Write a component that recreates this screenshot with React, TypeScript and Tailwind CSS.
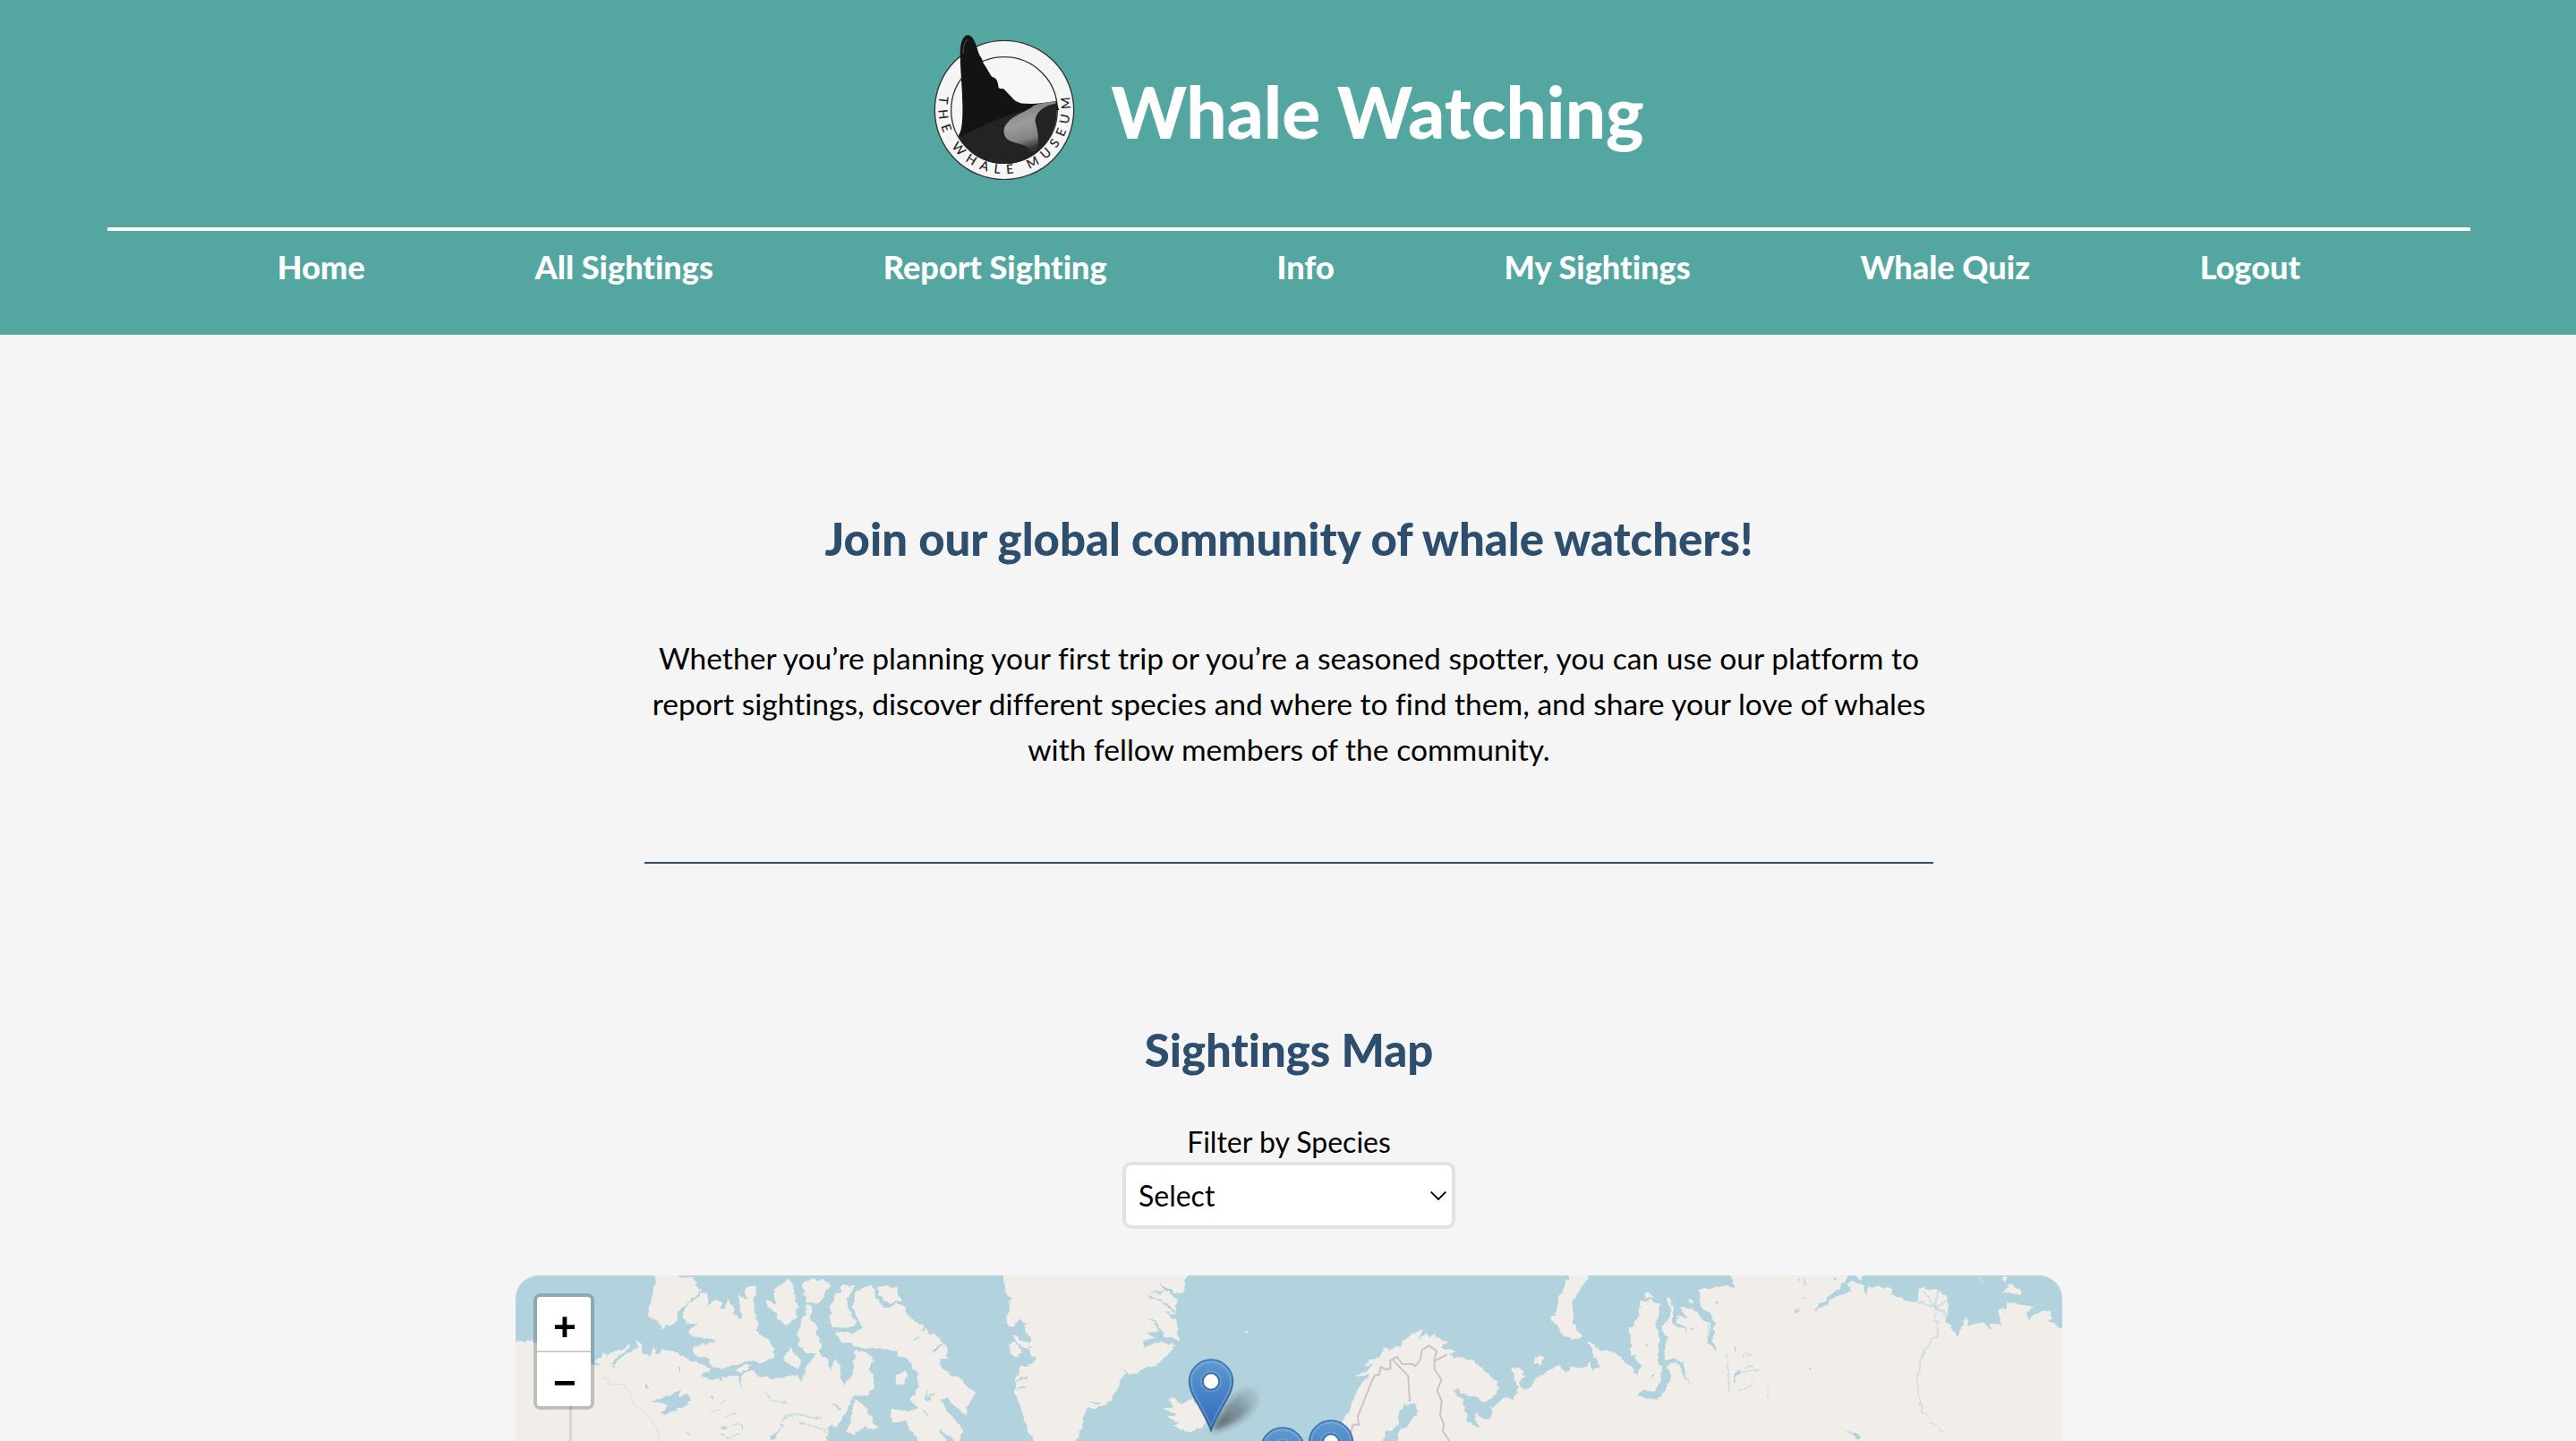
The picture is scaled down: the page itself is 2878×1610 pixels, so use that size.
import React from 'react';

const LINKS = ['Home', 'All Sightings', 'Report Sighting', 'Info', 'My Sightings', 'Whale Quiz', 'Logout'];

function Logo() {
  return (
    <svg viewBox="69 54 474 489" className="h-[163px] w-[158px] shrink-0" aria-label="The Whale Museum">
      <defs>
        <path id="ring" d="M89 262 A221 221 0 1 0 525 268" fill="none" />
        <clipPath id="inner">
          <path d="M0 0H600V309H482A176 180 0 0 1 130 309L100 309H0Z" />
        </clipPath>
        <linearGradient id="water" x1="0" y1="0" x2="0.3" y2="1">
          <stop offset="0" stopColor="#6f6f6f" />
          <stop offset="0.5" stopColor="#9c9c9c" />
          <stop offset="0.8" stopColor="#858585" />
          <stop offset="1" stopColor="#333" />
        </linearGradient>
      </defs>
      <circle cx="306" cy="309" r="233" fill="#f5f5f5" stroke="#333" strokeWidth="4" />
      <circle cx="306" cy="309" r="178" fill="#f6f6f6" stroke="#333" strokeWidth="4" />
      <g clipPath="url(#inner)">
        <path
          d="M153 393C164 380 167 340 166 290C165 230 158 170 158 115C160 80 168 58 185 58C203 60 212 90 219 115C224 130 232 134 236 152C250 170 256 188 266 198C280 202 284 210 287 234C292 240 303 234 307 241L337 272C345 282 352 280 358 285C390 291 440 286 479 278L490 309V500H130Z"
          fill="#131313"
        />
        <path d="M155 400C200 380 250 350 310 330C380 310 420 290 482 280V500H150Z" fill="#232323" />
        <path
          d="M478 279C450 283 425 286 404 294C385 314 335 326 318 350C300 368 300 392 318 408C345 425 375 420 390 440C400 452 412 452 417 435C424 400 416 372 410 348C408 318 440 292 478 287Z"
          fill="url(#water)"
        />
        <path d="M168 120C168 98 173 82 183 72" fill="none" stroke="#555" strokeWidth="3" />
      </g>
      <text fill="#222" className="font-['Lato',sans-serif] text-[43px] font-medium">
        <textPath href="#ring" textLength="770" lengthAdjust="spacing">
          THE WHALE MUSEUM
        </textPath>
      </text>
    </svg>
  );
}

const LAND_WEST = [
  'M0 620V264L75 262L92 275L270 335L298 348L285 330L315 305L325 320L350 300L402 278L395 295L370 308L335 340L350 345L375 318L405 300L425 285L422 262L440 275L448 305L470 320L480 280L490 314L512 295L545 298L575 315L620 335L650 345L668 365L643 378L650 390L700 394L740 378L765 378L772 430L775 385L800 365L830 378L865 390L920 388L960 375L980 405L990 350L1010 335L1030 300L1065 325L1073 370L1085 325L1095 325L1108 355L1110 385L1120 415L1145 380L1152 345L1155 298L1180 300L1220 325L1205 360L1222 400L1220 420L1190 450L1150 448L1140 470L1128 500L1115 530L1095 550L1070 550L1062 575L1065 620Z',
  'M480 40L486 70L475 120L462 178L495 195L512 228L530 210L555 205L560 170L585 145L640 95L610 50L570 55L560 40Z',
  'M580 165L600 135L640 108L660 105L665 130L660 155L685 125L710 135L700 158L725 150L722 125L750 145L755 180L770 195L778 185L765 140L765 110L790 130L785 95L800 82L822 82L825 110L810 130L820 160L828 200L828 235L860 260L887 285L885 320L840 340L790 330L760 345L700 358L672 355L665 325L640 320L612 310L608 285L640 275L695 270L680 258L600 248L592 235L630 212L590 205L578 190Z',
  'M860 125L890 142L882 95L900 75L940 60L950 90L960 130L962 180L935 205L922 217L905 190L880 165L862 140Z',
  'M980 70L1010 55L1070 68L1040 137L990 135L985 105Z',
  'M990 140L1015 148L1003 190L1018 205L1030 235L1045 285L1030 310L985 300L963 275L970 220L985 190Z',
  'M925 300L940 290L975 330L970 358L945 350L915 325Z',
  'M755 362L790 342L808 345L795 360L770 372Z',
  'M1074 215V150L1090 110L1120 78L1160 75L1150 90L1130 130L1135 170L1160 200L1150 215L1110 222Z',
  'M1155 110L1180 85L1215 80L1228 115L1240 140L1260 150L1290 140L1322 150V325L1290 300L1240 285L1190 290L1150 278L1110 265L1083 235L1150 238L1180 220L1165 190L1150 160Z',
  'M1230 80L1290 85L1312 130L1270 137L1240 115Z',
  'M1150 462L1172 472L1190 490L1215 530L1237 555L1220 568L1190 550L1175 560L1158 582L1125 565L1140 540L1148 500Z',
  'M1275 515L1305 492L1322 500V540L1290 535Z',
];

const LAND_MID = [
  'M0 95L18 130L0 127Z',
  'M-10 145L30 165L50 190L80 205L100 215L110 240L150 250L170 290L180 325L150 325L155 350L190 375L230 400L255 430L270 440L250 470L235 510L215 500L190 470L170 450L155 462L175 500L210 540L225 565L215 605L195 598L145 560L175 610L80 610L60 570L35 535L-10 535V497L40 500L82 490L50 462L85 420L75 380L60 345L-10 285Z',
  'M5 380L30 368L40 385L25 410L5 415Z',
  'M362 40L365 85L390 125L380 165L372 208L395 215L415 190L435 205L440 240L455 260L445 290L470 325L455 345L420 350L405 390L405 440L420 490L435 540L470 610L600 610L625 560L630 510L650 490L690 485L720 465L745 430L750 400L775 378L760 352L785 378L830 360L875 345L942 282L890 268L835 285L830 265L870 255L845 240L885 235L870 205L835 182L880 205L890 225L910 252L952 262L945 200L900 160L940 175L945 130L905 95L880 66L920 90L935 108L970 95L970 70L990 40Z',
  'M390 250L410 248L450 275L445 290L415 275Z',
  'M383 275L400 272L432 300L410 320L388 310Z',
  'M905 488L938 490L915 462L930 448L950 470L965 475L990 460L1015 475L1045 520L1040 545L1000 572L960 560L932 548L948 538L912 516L942 512Z',
  'M1165 242L1185 226L1184 236Z',
];

const LAND_NORDIC = [
  'M575 620L600 530L620 510L640 450L660 410L692 378L640 385L680 362L705 340L672 352L690 325L725 318L740 285L755 300L775 282L800 285L795 265L840 235L865 230L855 268L880 232L890 255L905 235L915 252L950 265L930 290L982 295L960 315L1000 320L1040 330L1080 370L1120 405L1122 440L1080 465L1030 450L980 425L975 432L1000 460L1015 500L1015 530L1040 550L1062 557L1042 525L1050 505L1075 530L1095 520L1100 490L1150 450L1172 465L1185 420L1172 370L1160 352L1200 360L1215 385L1190 400L1200 430L1235 430L1240 400L1330 355V620H775L790 570L820 545L850 510L850 482L810 476L790 500L785 545L745 570L725 620Z',
  'M1245 320L1260 310L1278 325L1262 348L1243 340Z',
];

const LAND_EAST = [
  'M20 620V440L38 402L85 365L110 355L130 340L140 362L150 372L165 352L200 355L230 335L235 365L258 345L245 310L220 270L228 262L258 295L310 302L345 330L388 375L398 345L380 310L362 310L370 260L358 230L390 190L402 130L440 130L463 142L460 180L445 210L462 240L458 335L475 355L465 400L445 435L400 430L395 440L420 458L455 458L480 430L497 390L490 350L515 335L535 350L545 395L565 402L545 380L550 350L515 322L480 330L478 290L488 255L468 215L498 185L500 150L487 122L492 118L510 150L506 215L540 222L558 238L545 212L520 205L525 180L555 188L535 160L545 150L580 160L612 195L640 200L620 270L655 300L640 265L648 200L620 165L600 155L597 92L690 75L712 85L700 40L1095 40L1085 70L1030 115L980 165L1060 115L1105 95L1090 75L1105 62L1140 82L1158 108L1160 90L1195 80L1245 92L1242 110L1290 128L1325 132L1328 88L1400 95L1425 115L1430 150L1425 190L1400 160L1430 210L1460 250L1472 220L1485 185L1500 212L1540 200L1577 225L1570 205L1608 212L1595 160L1625 155L1625 135L1670 140L1720 155L1690 165L1700 195L1730 165L1770 165L1780 190L1762 195L1820 228V620Z',
  'M160 40H228L185 110L168 150L172 205L203 250L185 258L140 248L125 215L98 198L100 175L115 180L120 130L140 90L150 65Z',
  'M415 110L428 97L442 118L415 122Z',
  'M563 135L570 120L576 138Z',
  'M1618 100L1645 68L1668 95L1668 112L1640 105Z',
  'M1614 50L1628 48L1620 70Z',
  'M1120 40H1155L1140 58Z',
];

const LAKES_WEST = [
  'M475 465L520 455L545 440L575 428L560 450L602 448L595 480L560 490L530 512L505 505L530 480L480 470Z',
  'M1074 472L1095 482L1122 495L1100 494Z',
  'M450 405L458 404L465 425L456 430Z',
  'M672 448H686L682 462Z',
  'M585 570L600 572L608 583Z',
  'M870 585L890 570L892 590L875 598Z',
  'M565 348H570V368H566Z',
  'M341 346H347V360H343Z',
  'M708 548L730 555L715 562Z',
  'M904 546L918 545L912 560Z',
];

const STREAMS_WEST = [
  'M858 438L875 465L925 470',
  'M700 475L725 462',
  'M672 495L705 498',
  'M725 520L760 505',
  'M700 578L735 588L765 580',
  'M755 545L778 545L775 560',
  'M910 530L940 510L990 515L1040 525',
  'M975 538L1030 555L1058 568',
  'M905 560L880 590',
];

const STREAMS_MID = [
  'M105 430V465L135 440', 'M95 500L115 520', 'M400 230L440 205', 'M425 300L455 285', 'M410 400L445 385', 'M410 425L440 420',
  'M850 115L900 135L935 165', 'M860 100L900 100', 'M690 475L650 470', 'M60 265L75 255', 'M130 300L165 270', 'M90 230L105 210',
];

const LAKES_EAST = [
  'M913 160H928V168L918 172Z', 'M942 120H948V128H942Z', 'M963 356L972 358L968 366Z', 'M945 50L955 72L947 74Z', 'M1042 50L1052 52L1048 60Z',
  'M651 130H659V137H651Z', 'M416 279H425V286H416Z', 'M437 381H446V387H437Z', 'M538 178L554 182L548 190Z', 'M708 404L714 372L740 366L722 385Z',
  'M714 282L722 290L718 306Z', 'M738 315L750 318L742 322Z', 'M921 55L928 58L925 68Z', 'M1737 148L1747 152L1740 158Z', 'M1106 578L1135 580L1120 600Z', 'M571 221H578V228H571Z',
];

const STREAMS_EAST = [
  'M686 308L692 360L698 410L694 444', 'M750 312L778 312', 'M745 348L778 348', 'M722 368L795 362', 'M728 426L750 424L770 408', 'M824 425V450',
  'M1085 565L1110 575L1122 590', 'M630 205L622 270',
];

const RIVER_EAST = 'M1388 152L1388 190L1396 215L1394 250L1370 262L1370 280L1352 295L1335 335L1334 365L1322 385L1322 405L1335 460L1342 500L1360 522';

const BORDERS = [
  'M628 570L635 545L655 545L650 520L700 395L708 380L722 378L728 352L745 360L760 358V330L782 318L800 342L832 342L845 348L860 328L866 295L890 280L915 298L908 325L908 360L932 395L917 430L932 465L927 515L940 545L935 565L958 600',
  'M770 330L820 382L825 468',
  'M912 330L950 310',
];

function Shapes({ items }: { items: string[] }) {
  return (
    <>
      {items.map((d) => (
        <path key={d} d={d} />
      ))}
    </>
  );
}

function Marker({ x, y }: { x: number; y: number }) {
  return (
    <g transform={`translate(${x} ${y})`}>
      <path d="M0 80C14 55 24 36 42 34C56 34 54 50 40 62C28 72 14 77 0 80Z" fill="url(#shade)" filter="url(#shadeBlur)" />
      <path
        d="M0 79.5C-3 71 -11 57 -17 46C-22 38 -24.3 32 -24.3 25A24.3 24.3 0 0 1 24.3 25C24.3 32 22 38 17 46C11 57 3 71 0 79.5Z"
        fill="url(#pin)"
        stroke="url(#pinEdge)"
        strokeWidth="1.8"
      />
      <path
        d="M0 74C-3 67 -9 56 -15 45C-20 37 -22 32 -22 25A22 22 0 0 1 22 25C22 32 20 37 15 45C9 56 3 67 0 74Z"
        fill="none"
        stroke="#fff"
        strokeOpacity="0.16"
        strokeWidth="2"
      />
      <circle cy="25" r="11" fill="none" stroke="#fff" strokeOpacity="0.15" strokeWidth="2" />
      <circle cy="25" r="9.2" fill="#fff" stroke="#376fa6" strokeWidth="2" />
    </g>
  );
}

function WorldMap() {
  return (
    <svg viewBox="0 0 1728 185" className="h-[185px] w-[1728px]" preserveAspectRatio="none">
      <defs>
        <linearGradient id="pin" x1="0" y1="0" x2="0" y2="1">
          <stop offset="0" stopColor="#5e9ad0" />
          <stop offset="1" stopColor="#3068bd" />
        </linearGradient>
        <linearGradient id="pinEdge" x1="0" y1="0" x2="0" y2="1">
          <stop offset="0" stopColor="#4379b3" />
          <stop offset="1" stopColor="#35608f" />
        </linearGradient>
        <linearGradient id="shade" x1="0" y1="1" x2="1" y2="0">
          <stop offset="0" stopColor="#222" stopOpacity="0.7" />
          <stop offset="1" stopColor="#222" stopOpacity="0.05" />
        </linearGradient>
        <filter id="shadeBlur" x="-30%" y="-30%" width="160%" height="160%">
          <feGaussianBlur stdDeviation="3.5" />
        </filter>
        <filter id="coast" filterUnits="userSpaceOnUse" x="-10" y="-20" width="1750" height="225">
          <feTurbulence type="fractalNoise" baseFrequency="0.13" numOctaves="2" seed="4" result="n" />
          <feDisplacementMap in="SourceGraphic" in2="n" scale="7" xChannelSelector="R" yChannelSelector="G" />
          <feGaussianBlur stdDeviation="0.7" />
        </filter>
      </defs>
      <rect width="1728" height="185" fill="#b2d2dd" />
      <g filter="url(#coast)">
        <g fill="#f1eee9">
          <g transform="translate(-6 -15) scale(.33333)"><Shapes items={LAND_WEST} /></g>
          <g transform="translate(424 -15) scale(.33333)"><Shapes items={LAND_MID} /></g>
          <g transform="translate(724 -15) scale(.33333)"><Shapes items={LAND_NORDIC} /></g>
          <g transform="translate(1124 -15) scale(.33333)"><Shapes items={LAND_EAST} /></g>
        </g>
        <g fill="#b2d2dd">
          <g transform="translate(-6 -15) scale(.33333)"><Shapes items={LAKES_WEST} /></g>
          <g transform="translate(1124 -15) scale(.33333)"><Shapes items={LAKES_EAST} /></g>
        </g>
        <g fill="none" stroke="#b2d2dd" strokeWidth="5" strokeLinecap="round" strokeLinejoin="round">
          <g transform="translate(-6 -15) scale(.33333)" strokeOpacity="0.7"><Shapes items={STREAMS_WEST} /></g>
          <g transform="translate(424 -15) scale(.33333)"><Shapes items={STREAMS_MID} /></g>
          <g transform="translate(1124 -15) scale(.33333)" strokeOpacity="0.6">
            <Shapes items={STREAMS_EAST} />
            <path d={RIVER_EAST} />
            <path d="M1330 135L1385 152M1350 100L1385 150L1400 98M1385 152L1428 130M1385 152L1425 175M1375 540L1390 548M1402 558L1414 570" />
            <path d="M1534 52L1546 68" stroke="#f1eee9" />
          </g>
          <g transform="translate(-6 -15) scale(.33333)" strokeOpacity="0.4">
            <path d="M312 385L335 412L380 408L410 455L408 475L450 505L480 540L508 600" strokeWidth="4" />
          </g>
        </g>
      </g>
      <g fill="none" stroke="#cfc0ca" strokeWidth="6" strokeLinejoin="round">
        <path d="M61.5 140V185" stroke="#ddd3da" strokeWidth="3.4" />
        <g transform="translate(724 -15) scale(.33333)"><Shapes items={BORDERS} /></g>
      </g>
      <Marker x={777} y={93.5} />
      <Marker x={911} y={161.5} />
      <Marker x={857} y={169.5} />
    </svg>
  );
}

export default function App() {
  return (
    <div className="h-[1610px] w-full overflow-hidden bg-[#f5f5f5] font-['Lato',sans-serif] text-black [font-variant-ligatures:none]">
      <div className="flex w-[2880px] flex-col items-center">
        <header className="flex h-[374px] w-full flex-col items-center bg-[#53a7a0] text-white">
          <div className="flex h-[254px] items-start gap-10 pt-[38px]">
            <Logo />
            <h1 className="pt-[38px] text-[80.1px] leading-[97px] font-black whitespace-nowrap">Whale Watching</h1>
          </div>
          <nav className="flex w-[2640px] justify-evenly border-t-4 border-white pt-[18px] text-[36.1px] leading-[44px] font-black">
            {LINKS.map((label) => (
              <a key={label} href="#">
                {label}
              </a>
            ))}
          </nav>
        </header>
        <section className="mt-[197px] flex w-[1440px] flex-col items-center border-b-2 border-[#2e4e6e] pb-[100px] text-center">
          <h2 className="text-[50.9px] leading-[62px] font-black text-[#2e4e6e]">Join our global community of whale watchers!</h2>
          <p className="mt-[77px] text-[33.6px] leading-[51px]">
            Whether you’re planning your first trip or you’re a seasoned spotter, you can use our platform to report
            sightings, discover different species and where to find them, and share your love of whales with fellow
            members of the community.
          </p>
        </section>
        <section className="mt-[177px] flex flex-col items-center">
          <h2 className="text-[50.9px] leading-[62px] font-black text-[#2e4e6e]">Sightings Map</h2>
          <span className="mt-[53px] text-[32px] leading-[38px]">Filter by Species</span>
          <button className="mt-[3px] flex h-[75px] w-[372px] items-center justify-between rounded-[10px] border-4 border-[#e2e2e2] bg-white pr-[6px] pl-[14px] text-[32px] leading-[38px]">
            <span>Select</span>
            <svg viewBox="0 0 18 10" className="h-[10px] w-[18px]" fill="none" stroke="#000" strokeWidth="1.8">
              <path d="M0.7 0.7L9 9L17.3 0.7" />
            </svg>
          </button>
          <div className="relative mt-[52px] h-[185px] w-[1728px] overflow-hidden rounded-t-[26px]">
            <WorldMap />
            <div className="absolute top-5 left-5 flex w-[68px] flex-col overflow-hidden rounded-lg border-4 border-black/20 bg-clip-padding text-center font-['Liberation_Mono',monospace] text-[44px] font-bold">
              <button className="h-[62px] border-b-2 border-[#ccc] bg-white pt-[14px] pl-[2px] leading-[46px]">+</button>
              <button className="h-[60px] bg-white pt-[14px] pl-[2px] leading-[46px]">−</button>
            </div>
          </div>
        </section>
      </div>
    </div>
  );
}
